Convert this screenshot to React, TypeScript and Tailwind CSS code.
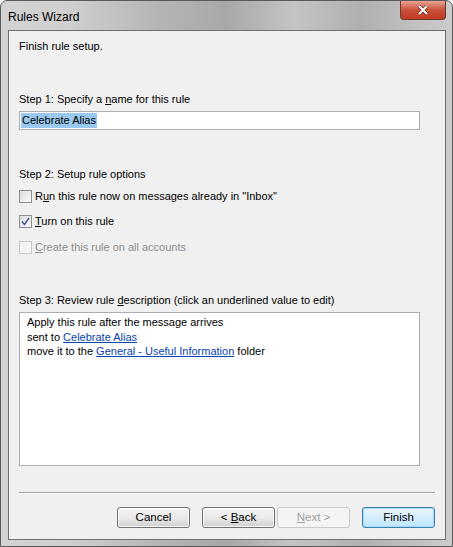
import React from 'react';

const FONT = { fontFamily: '"Segoe UI", "Liberation Sans", Arial, sans-serif' };

function Check({ checked, disabled }: { checked?: boolean; disabled?: boolean }) {
  return (
    <span
      className={`inline-flex items-center justify-center w-[13px] h-[13px] border ${
        disabled ? 'border-[#c8c8c8] bg-[#f4f4f4]' : 'border-[#8e8f8f] bg-gradient-to-br from-[#dcdcdc] to-[#fbfbfb]'
      }`}
    >
      {checked && (
        <svg width="9" height="9" viewBox="0 0 9 9">
          <path d="M1 4.5 L3.5 7.5 L8 1" stroke="#4a5f97" strokeWidth="1.6" fill="none" />
        </svg>
      )}
    </span>
  );
}

function Btn({ children, disabled, primary }: { children: React.ReactNode; disabled?: boolean; primary?: boolean }) {
  return (
    <button
      className={`w-[73px] h-[21px] rounded-[3px] border text-[11.5px] leading-none ${
        disabled
          ? 'border-[#c9c9c9] bg-[#f4f4f4] text-[#a0a0a0]'
          : primary
          ? 'border-[#3c7fb1] bg-gradient-to-b from-[#eaf6fd] to-[#bee6fd] text-black shadow-[inset_0_0_0_1px_#a6dbf8]'
          : 'border-[#707070] bg-gradient-to-b from-[#f2f2f2] via-[#ebebeb] to-[#cfcfcf] text-black shadow-[inset_0_0_0_1px_#fcfcfc]'
      }`}
    >
      {children}
    </button>
  );
}

export default function App() {
  return (
    <div className="w-[453px] h-[547px] bg-white" style={FONT}>
      <div className="w-[453px] h-[547px] rounded-t-[7px] border border-[#5a5a5a] bg-[linear-gradient(90deg,#d3d3d3_0%,#cfcfcf_15%,#b5b5b5_35%,#a8a8a8_50%,#c4c4c4_65%,#b0b0b0_80%,#cccccc_100%)] flex flex-col">
        {/* title bar */}
        <div className="h-[29px] flex items-start justify-between pl-[7px] pr-[6px]">
          <span className="text-[12px] text-black mt-[7px]">Rules Wizard</span>
          <div className="w-[46px] h-[19px] rounded-b-[4px] border border-t-0 border-[#6a3a30] bg-gradient-to-b from-[#e8a495] via-[#c9503a] to-[#c23a22] flex items-center justify-center">
            <svg width="12" height="10" viewBox="0 0 12 10">
              <path d="M2 1 L10 9 M10 1 L2 9" stroke="#5a2a20" strokeWidth="3.2" />
              <path d="M2 1 L10 9 M10 1 L2 9" stroke="#ffffff" strokeWidth="2" />
            </svg>
          </div>
        </div>
        {/* client area */}
        <div className="ml-[7px] mr-[6px] h-[510px] border border-[#6e6e6e] bg-[#f0f0f0] text-[11px] text-black flex flex-col px-[10px]">
          <div className="mt-[8px] leading-[15px]">Finish rule setup.</div>

          <div className="mt-[38px] leading-[15px]">
            Step 1: Specify a <span className="underline">n</span>ame for this rule
          </div>
          <div className="mt-[4px] w-[401px] h-[19px] border border-[#abadb3] bg-white flex items-center px-[1px]">
            <span className="bg-[#99c9ef] leading-[15px] px-[1px]">Celebrate Alias</span>
          </div>

          <div className="mt-[37px] leading-[15px]">Step 2: Setup rule options</div>
          <div className="mt-[7px] flex items-center gap-[3px] leading-[15px]">
            <Check />
            <span>
              R<span className="underline">u</span>n this rule now on messages already in "Inbox"
            </span>
          </div>
          <div className="mt-[10px] flex items-center gap-[3px] leading-[15px]">
            <Check checked />
            <span>
              <span className="underline">T</span>urn on this rule
            </span>
          </div>
          <div className="mt-[11px] flex items-center gap-[3px] leading-[15px] text-[#8d8d8d]">
            <Check disabled />
            <span>
              <span className="underline">C</span>reate this rule on all accounts
            </span>
          </div>

          <div className="mt-[38px] leading-[15px]">
            Step 3: Review rule <span className="underline">d</span>escription (click an underlined value to edit)
          </div>
          <div className="mt-[4px] w-[401px] h-[154px] border border-[#abadb3] bg-white px-[7px] pt-[2px] leading-[14.5px]">
            <div>Apply this rule after the message arrives</div>
            <div>
              sent to <span className="text-[#0645ad] underline">Celebrate Alias</span>
            </div>
            <div>
              move it to the <span className="text-[#0645ad] underline">General - Useful Information</span> folder
            </div>
          </div>

          <div className="mt-[26px] w-[416px] h-[2px] border-t border-[#a0a0a0] border-b border-b-white" />

          <div className="mt-[13px] flex justify-end">
            <Btn>Cancel</Btn>
            <div className="w-[12px]" />
            <Btn>
              &lt; <span className="underline">B</span>ack
            </Btn>
            <div className="w-[2px]" />
            <Btn disabled>
              <span className="underline">N</span>ext &gt;
            </Btn>
            <div className="w-[12px]" />
            <Btn primary>Finish</Btn>
          </div>
        </div>
      </div>
    </div>
  );
}
